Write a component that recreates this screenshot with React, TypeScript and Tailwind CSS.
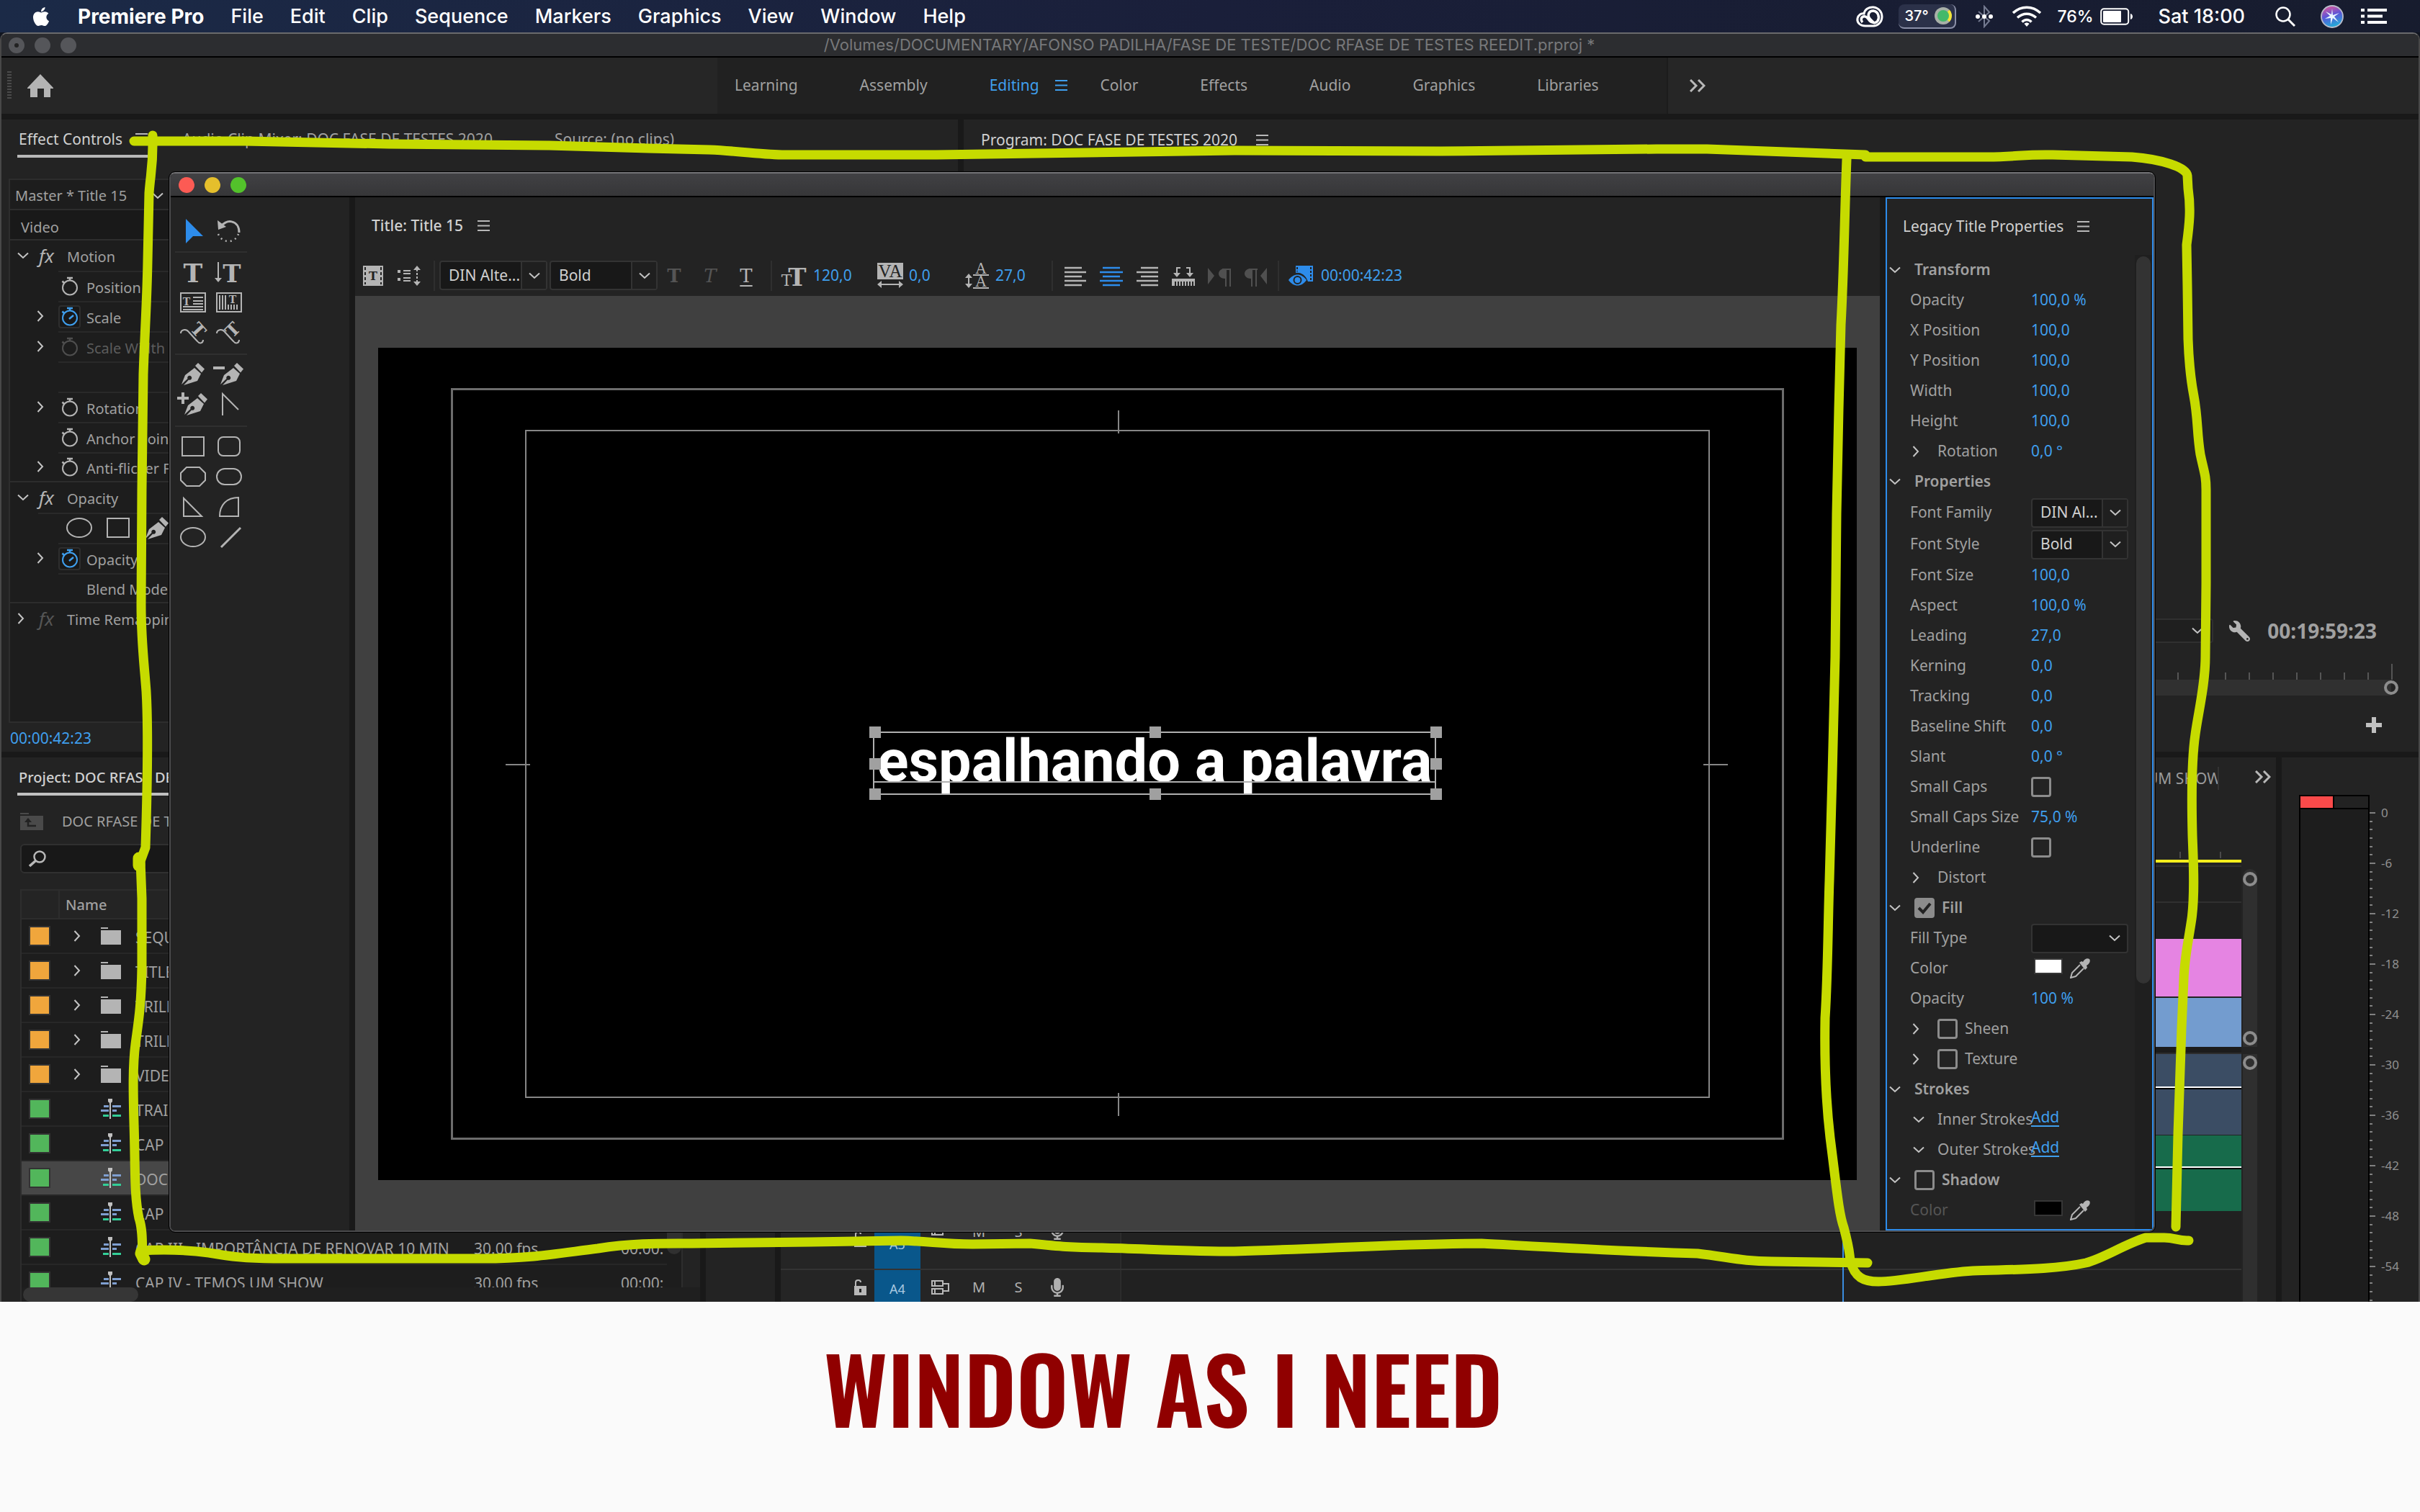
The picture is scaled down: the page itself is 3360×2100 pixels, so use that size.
import type { ReactNode } from "react";
import { FaApple, FaMicrophone, FaWrench } from "react-icons/fa";

/* ---------- shared icons ---------- */

const DOWN = "M1 1.5 8 8l7-6.5";
const RIGHT = "M1.500 1 8 8l-6.500 7";

function Down({ className = "" }: { className?: string }) {
  return (
    <svg viewBox="0 0 16 10" className={`h-[10px] w-4 shrink-0 ${className}`} fill="none" stroke="#c4c4c4" strokeWidth="2">
      <path d={DOWN} />
    </svg>
  );
}

function Right({ className = "" }: { className?: string }) {
  return (
    <svg viewBox="0 0 10 16" className={`h-4 w-[10px] shrink-0 ${className}`} fill="none" stroke="#c4c4c4" strokeWidth="2">
      <path d={RIGHT} />
    </svg>
  );
}

function Burger({ className = "text-[#b8b8b8]" }: { className?: string }) {
  return (
    <svg viewBox="0 0 17 16" className={`h-4 w-[17px] shrink-0 ${className}`} fill="currentColor">
      <path d="M0 0h17v2H0zM0 6.500h17v2H0zM0 13h17v2H0z" />
    </svg>
  );
}

function Chevrons() {
  return (
    <svg viewBox="0 0 22 18" className="h-[18px] w-[22px]" fill="none" stroke="#b8b8b8" strokeWidth="3">
      <path d="m1 1 8 8-8 8M12 1l8 8-8 8" />
    </svg>
  );
}

const Pen = () => (
  <g fill="#b4b4b4">
    <path d="M0 30 5 17 18 7l9 8-5 10L3 31l7-7.500a3 3 0 1 0-1.500-1.500z" />
    <path d="m19 4 4-4 9 8.500-4 5z" />
  </g>
);

const Ring = () => <span className="block h-5 w-5 shrink-0 rounded-full border-4 border-[#8c8c8c]" />;

/* ---------- menu bar ---------- */

const menus = ["File", "Edit", "Clip", "Sequence", "Markers", "Graphics", "View", "Window", "Help"];

function MenuBar() {
  return (
    <header className="flex h-[45px] shrink-0 items-center bg-linear-to-r from-[#1b2a47] via-[#1a1f3a] to-[#171c2e] pl-[42px] pr-[46px] font-['Inter',sans-serif] text-[27px] leading-[40px] text-white">
      <FaApple className="mr-[36px] size-[30px]" />
      <nav className="flex items-center gap-[37px] whitespace-nowrap">
        <button className="text-[28px] font-bold">Premiere Pro</button>
        {menus.map((m) => (
          <button key={m} className="font-medium">{m}</button>
        ))}
      </nav>
      <div className="ml-auto flex items-center whitespace-nowrap">
        <svg viewBox="0 0 40 30" className="h-[30px] w-10" fill="none" stroke="#fff">
          <path d="M14 28C6 28 2 23 3 17.500 4 13 8 10 12 11 13 5 19 1.500 25 2c8 1 12 7 12 13 0 8-6 13-12 13z" strokeWidth="3" />
          <path d="M10 23c-3-3-2-7 1-8 4-1 6 2 9 6 3 3 8 4 11 0 3-5 1-13-6-14-7 0-9 7-4 12l4 4" strokeWidth="3.500" />
        </svg>
        <span className="ml-5 flex h-[34px] w-20 items-center justify-between rounded-lg border-b-2 border-r-2 border-[#8b90a8] bg-[#2b3149] pl-2 pr-1 text-[20px] font-medium">
          37°
          <span className="flex size-6 items-center justify-center rounded-full border-[4px] border-[#a8b0a8] border-r-[#f3e53b] bg-[#43b96a]" />
        </span>
        <svg viewBox="0 0 24 32" className="ml-[27px] h-8 w-6" fill="none" stroke="#747a90" strokeWidth="2">
          <path d="m4 9 15 13-7 8V2l7 8L4 23" />
          <g fill="#fff" stroke="none"><circle cx="3" cy="16" r="3" /><circle cx="12" cy="16" r="3" /><circle cx="21" cy="16" r="3" /></g>
        </svg>
        <svg viewBox="0 0 42 30" className="ml-[26px] h-[30px] w-[42px]" fill="none" stroke="#fff" strokeWidth="3.500">
          <path d="M2 10c11-10.500 27-10.500 38 0M8 16.500c8-7 18-7 26 0M14.500 22.500c4-4 9-4 13 0" />
          <path d="m21 29-3.500-4c2-2 5-2 7 0z" fill="#fff" stroke="none" />
        </svg>
        <span className="ml-[21px] text-[23px] font-medium">76%</span>
        <svg viewBox="0 0 46 24" className="ml-[9px] h-6 w-[46px]" fill="none">
          <rect x="1.200" y="1.200" width="38" height="21.600" rx="4" stroke="#fff" strokeWidth="2" />
          <rect x="4" y="4" width="25" height="16" rx="1" fill="#fff" />
          <path d="M42 8c4 1 4 7 0 8z" fill="#fff" />
        </svg>
        <time className="ml-[35px] font-medium">Sat 18:00</time>
        <svg viewBox="0 0 28 28" className="ml-[42px] size-7" fill="none" stroke="#fff" strokeWidth="2.500">
          <circle cx="11" cy="11" r="9.500" />
          <path d="m18 18 9 9" strokeWidth="3" />
        </svg>
        <svg viewBox="0 0 32 32" className="ml-[35px] size-8">
          <defs>
            <linearGradient id="siri" x1="0.300" y1="0" x2="0.600" y2="1">
              <stop offset="0" stopColor="#e0559b" /><stop offset="0.450" stopColor="#5b55d8" /><stop offset="1" stopColor="#1db4d8" />
            </linearGradient>
          </defs>
          <circle cx="16" cy="16" r="15" fill="url(#siri)" stroke="#b9bccb" strokeWidth="1.800" />
          <path d="m16 5 1 9 9-3-7 5 6 8-8-6-3 9v-9l-8 1 7-4-6-6 8 4z" fill="#e9f6ff" />
        </svg>
        <svg viewBox="0 0 36 21" className="ml-6 h-[21px] w-9" fill="#fff">
          <path d="M0 0h5v4H0zM9 0h27v4H9zM0 8.500h5v4H0zM9 8.500h21v4H9zM0 17h5v4H0zM9 17h27v4H9z" />
        </svg>
      </div>
    </header>
  );
}

/* ---------- workspaces ---------- */

function Workspaces() {
  return (
    <div className="flex h-20 shrink-0 items-center border-t-2 border-black bg-[#262626] text-[21px] text-[#a0a0a0]">
      <span className="ml-2 h-10 w-[6px] shrink-0 bg-[repeating-linear-gradient(to_bottom,#4a4a4a_0_2px,transparent_2px_4px)]" />
      <button aria-label="Home" className="ml-[22px]">
        <svg viewBox="0 0 36 32" className="h-8 w-9" fill="#b4b4b4">
          <path d="M18 0 36 19v1h-4v12h-9V20h-9v12H4V20H0v-1z" />
        </svg>
      </button>
      <nav className="ml-[922px] flex h-full items-center gap-[86px] bg-[#212121] pl-6 pr-[94px]">
        <button>Learning</button>
        <button>Assembly</button>
        <span className="flex items-center gap-[22px]">
          <button className="text-[#3f9fee]">Editing</button>
          <Burger className="text-[#3f9fee]" />
        </span>
        <button className="-ml-10">Color</button>
        <button>Effects</button>
        <button>Audio</button>
        <button>Graphics</button>
        <button>Libraries</button>
      </nav>
      <button aria-label="More workspaces" className="flex h-full items-center border-l-2 border-[#1c1c1c] pl-[30px]"><Chevrons /></button>
    </div>
  );
}

/* ---------- effect controls ---------- */

function Stopwatch({ on, dim }: { on?: boolean; dim?: boolean }) {
  const color = on ? "#3f9fee" : dim ? "#4e4e4e" : "#b4b4b4";
  return (
    <span className={`flex h-8 w-[31px] shrink-0 items-center justify-center rounded border-2 ${on ? "border-[#2e2e2e] bg-[#181818]" : "border-transparent"}`}>
      <svg viewBox="0 0 24 28" className="h-7 w-6" fill="none" stroke={color} strokeWidth="2">
        <circle cx="12" cy="15.500" r="10" />
        <path d="M8 2h8M12 2v4M1.500 6.500l3 3" strokeWidth="2.500" />
        {on && <path d="m11 17 6-5" strokeWidth="2.500" />}
      </svg>
    </span>
  );
}

function EffectRow({ name, open, bypass }: { name: string; open: boolean; bypass?: boolean }) {
  return (
    <div className="flex h-[42px] items-center">
      <span className="flex w-10 shrink-0 pl-[10px]">{open ? <Down /> : <Right />}</span>
      <span className={`w-[39px] shrink-0 text-[26px] italic leading-[40px] ${bypass ? "text-[#555]" : "text-[#b4b4b4]"}`}>fx</span>
      <span className="pt-1">{name}</span>
    </div>
  );
}

function ParamRow({ name, arrow, watch = true, on, dim, last }: { name: string; arrow?: boolean; watch?: boolean; on?: boolean; dim?: boolean; last?: boolean }) {
  return (
    <div className={`flex h-[42px] items-center ${last ? "border-b-2 border-[#2c2c2c]" : ""}`}>
      <span className="flex w-[67px] shrink-0 pl-[37px]">{arrow && <Right />}</span>
      <span className={`flex h-full flex-1 items-center gap-2 border-t-2 border-[#292929] ${dim ? "text-[#5c5c5c]" : ""}`}>
        {watch ? <Stopwatch on={on} dim={dim} /> : <span className="w-[31px]" />}
        <span className="pt-1">{name}</span>
      </span>
    </div>
  );
}

function EffectControls() {
  return (
    <section className="flex w-[1328px] shrink-0 flex-col overflow-hidden bg-[#232323] text-[20px] text-[#a0a0a0]">
      <div className="flex h-[53px] shrink-0 items-end whitespace-nowrap text-[21px] leading-[44px]">
        <button className="ml-[22px] flex w-[181px] items-center justify-between border-b-4 border-[#b8b8b8] pl-[2px] text-[#d0d0d0]">
          Effect Controls <Burger />
        </button>
        <button className="ml-[48px] border-b-4 border-transparent">Audio Clip Mixer: DOC FASE DE TESTES 2020</button>
        <button className="ml-[86px] border-b-4 border-transparent">Source: (no clips)</button>
      </div>
      <div className="ml-[10px] mt-[29px] flex flex-1 flex-col border-2 border-[#2d2d2d] bg-[#1d1d1d]">
        <div className="flex h-[42px] items-center border-b-2 border-[#2d2d2d] pl-[7px] pt-1">
          <span className="w-[190px]">Master * Title 15</span><Down />
        </div>
        <div className="flex h-[42px] items-center border-b-2 border-[#2d2d2d] bg-[#191919] pl-[15px] pt-2">Video</div>
        <EffectRow name="Motion" open />
        <ParamRow name="Position" />
        <ParamRow name="Scale" arrow on />
        <ParamRow name="Scale Width" arrow dim />
        <ParamRow name="" watch={false} />
        <ParamRow name="Rotation" arrow />
        <ParamRow name="Anchor Point" />
        <ParamRow name="Anti-flicker Filter" arrow last />
        <EffectRow name="Opacity" open />
        <div className="ml-[39px] flex h-[42px] items-center border-t-2 border-[#292929] pl-[39px]">
          <svg viewBox="0 0 150 32" className="h-8 w-[150px]" fill="none" stroke="#b4b4b4" strokeWidth="2">
            <ellipse cx="18" cy="15" rx="17" ry="13" />
            <rect x="57" y="2" width="30" height="26" />
            <g transform="translate(110 0)" stroke="none"><Pen /></g>
          </svg>
        </div>
        <ParamRow name="Opacity" arrow on />
        <ParamRow name="Blend Mode" watch={false} last />
        <EffectRow name="Time Remapping" open={false} bypass />
      </div>
      <div className="flex h-10 shrink-0 items-center pl-3 pt-1 text-[21px] text-[#3f9fee]"><button>00:00:42:23</button></div>
    </section>
  );
}

/* ---------- program monitor ---------- */

function ProgramMonitor() {
  return (
    <section className="flex min-w-0 flex-1 flex-col bg-[#232323] text-[#a0a0a0]">
      <div className="flex h-[57px] items-center gap-[26px] pl-6 text-[21px] text-[#d0d0d0]">
        Program: DOC FASE DE TESTES 2020 <Burger />
      </div>
      <div className="flex-1" />
      <div className="flex h-[34px] items-center justify-end pr-[58px]">
        <div className="flex h-full w-[300px] items-center justify-end rounded border-2 border-[#303030] bg-[#1f1f1f] pr-3"><Down /></div>
        <FaWrench className="ml-[22px] size-[29px] -scale-x-100 text-[#b4b4b4]" />
        <time className="ml-6 text-[28px] font-bold">00:19:59:23</time>
      </div>
      <div className="mt-7 flex h-[23px] flex-row-reverse items-end pr-[36px]">
        <span className="h-[22px] border-r-2 border-[#555]" />
        {Array.from({ length: 11 }, (_, i) => (
          <span key={i} className="flex h-[10px] w-[33px] border-l-2 border-[#555]" />
        ))}
      </div>
      <div className="flex h-[22px] items-center justify-end bg-linear-to-l from-transparent from-[38px] to-[#303030] to-[38px] pr-[28px]"><Ring /></div>
      <div className="flex h-[78px] items-center justify-end pr-[51px] pt-1">
        <button aria-label="Button editor">
          <svg viewBox="0 0 22 22" className="size-[22px]" fill="#c0c0c0"><path d="M8 0h6v8h8v6h-8v8H8v-8H0V8h8z" /></svg>
        </button>
      </div>
    </section>
  );
}

/* ---------- project panel ---------- */

const items = [
  { name: "SEQUENCES", bin: true }, { name: "TITLES", bin: true }, { name: "TRILHA", bin: true },
  { name: "TRILHA 2", bin: true }, { name: "VIDEOS", bin: true }, { name: "TRAILER" }, { name: "CAP" },
  { name: "DOC", selected: true }, { name: "CAP" },
  { name: "CAP III - IMPORTÂNCIA DE RENOVAR 10 MIN", rate: "30.00 fps", start: "00:00:" },
  { name: "CAP IV - TEMOS UM SHOW", rate: "30.00 fps", start: "00:00:" },
] as { name: string; bin?: boolean; selected?: boolean; rate?: string; start?: string }[];

function ItemIcon({ bin }: { bin?: boolean }) {
  return bin ? (
    <svg viewBox="0 0 28 24" className="h-6 w-7 shrink-0" fill="#b4b4b4"><path d="M0 0h10v2H0zM0 4h28v20H0z" /></svg>
  ) : (
    <svg viewBox="0 0 28 28" className="h-7 w-7 shrink-0">
      <path d="M4 9h7v3H4zM0 15h11v3H0zM16 9h12v3H16zM16 15h6v3h-6z" fill="#7f9fd0" />
      <path d="M3 22h8v3H3zM16 22h12v3H16z" fill="#33cf98" />
      <path d="M10 0h6v4l-2 2v22h-2V6l-2-2z" fill="#c0c0c0" />
    </svg>
  );
}

function ProjectPanel() {
  return (
    <section className="flex w-[970px] shrink-0 flex-col overflow-hidden bg-[#232323] text-[20px] text-[#a0a0a0]">
      <div className="flex shrink-0 pl-[22px] text-[#d0d0d0]">
        <button className="h-[53px] border-b-4 border-[#c0c0c0] pl-[2px] pr-6 pt-[6px] font-medium">Project: DOC RFASE DE TESTES REEDIT</button>
      </div>
      <div className="flex h-[67px] shrink-0 items-center gap-[26px] pl-[26px] pt-1">
        <svg viewBox="0 0 32 24" className="h-6 w-8"><path d="M0 0h12v2H0zM0 4h32v20H0z" fill="#4a4a4a" /><path d="M11 8v10h11" stroke="#222" strokeWidth="2.500" fill="none" /><path d="m6 13 5-6 5 6z" fill="#222" /></svg>
        DOC RFASE DE TESTES REEDIT.prproj
      </div>
      <label className="ml-[26px] mr-6 flex h-[41px] shrink-0 items-center rounded-md border-2 border-[#303030] bg-[#181818] pl-[10px]">
        <svg viewBox="0 0 24 24" className="size-6 shrink-0" fill="none" stroke="#b8b8b8" strokeWidth="2.500"><circle cx="15" cy="9" r="7.500" /><path d="M10 14 1 22" strokeWidth="3.500" /></svg>
        <input aria-label="Search project" className="ml-2 flex-1 bg-transparent outline-none" />
      </label>
      <div className="ml-[26px] mr-6 mt-[22px] flex min-h-0 flex-1 overflow-hidden border-l-2 border-r-2 border-t-2 border-[#2d2d2d] bg-[#1d1d1d]">
        <table className="w-full table-fixed self-start whitespace-nowrap text-left">
          <colgroup><col className="w-[52px]" /><col className="w-[576px]" /><col className="w-[204px]" /><col /></colgroup>
          <thead>
            <tr className="h-[39px] border-b-2 border-[#2d2d2d] bg-[#242424]">
              <th /><th className="border-l-2 border-[#2d2d2d] pl-2 pt-[2px] font-medium">Name</th><th /><th />
            </tr>
          </thead>
          <tbody>
            {items.map((it, i) => (
              <tr key={i} className={`h-12 border-b-2 border-[#272727] text-[21px] leading-7 ${it.selected ? "bg-[#474747]" : ""}`}>
                <td><span className={`ml-[10px] block h-7 w-[30px] border-2 border-[#333] ${it.bin ? "bg-[#f0a63c]" : "bg-[#52b65b]"}`} /></td>
                <td className="overflow-hidden">
                  <span className="flex items-center">
                    <span className="flex w-[58px] shrink-0 pl-5">{it.bin && <Right />}</span>
                    <ItemIcon bin={it.bin} />
                    <span className="pl-5 pt-1">{it.name}</span>
                  </span>
                </td>
                <td className="pt-1">{it.rate}</td>
                <td className="overflow-hidden pt-1">{it.start}</td>
              </tr>
            ))}
          </tbody>
        </table>
        <span className="h-[505px] w-5 shrink-0 rounded-full bg-[#303030]" />
      </div>
      <div className="ml-[26px] h-5 shrink-0 border-l-2 border-[#2d2d2d] bg-[#1f1f1f] pl-[2px]"><span className="block h-5 w-40 rounded-full bg-[#363636]" /></div>
    </section>
  );
}

/* ---------- timeline ---------- */

function Track({ className = "", head, children }: { className?: string; head?: ReactNode; children?: ReactNode }) {
  return (
    <div className={`flex ${className}`}>
      <div className="w-[473px] shrink-0 border-r-2 border-[#2c2c2c] bg-[#252525]">{head}</div>
      <div className="flex-1">{children}</div>
    </div>
  );
}

function TrackHead({ name, high }: { name: string; high?: boolean }) {
  const lift = high ? "mt-[14px]" : "";
  return (
    <div className={`flex h-full pl-[101px] text-[20px] text-[#b0b0b0] ${high ? "items-start" : "items-center"}`}>
      <svg viewBox="0 0 18 22" className={`h-[22px] w-[18px] shrink-0 ${high ? "mt-[28px]" : ""}`}><path d="M1 9h17v13H1z" fill="#b8b8b8" /><path d="M3 9V4c0-4 7-4 7 0" stroke="#b8b8b8" strokeWidth="2" fill="none" /><path d="M8 13h3v5H8z" fill="#222" /></svg>
      <button className={`ml-[11px] h-full w-16 shrink-0 bg-[#09578b] text-[18px] text-[#a8c8e0] ${high ? "pt-3" : "pt-1"}`}>{name}</button>
      <svg viewBox="0 0 26 20" className={`ml-[15px] h-5 w-[26px] shrink-0 ${lift}`} fill="none" stroke="#b8b8b8" strokeWidth="2"><path d="M1 1h15v7H1zM1 12h15v7H1zM16 5h8v10h-8M5 1v7M5 12v7" /></svg>
      <button className={`ml-[28px] w-6 ${lift}`}>M</button>
      <button className={`ml-[31px] w-6 ${lift}`}>S</button>
      <FaMicrophone className={`ml-[29px] size-[26px] ${lift}`} />
    </div>
  );
}

function Timeline() {
  return (
    <section className="flex min-w-0 flex-1 flex-col overflow-hidden bg-[#232323]">
      <div className="flex h-[131px] shrink-0 items-start justify-end pr-[7px] pt-[13px] text-[21px] text-[#9a9a9a]">
        <button className="w-[100px] overflow-hidden whitespace-nowrap border-r-2 border-[#333] text-left leading-[32px]">UM SHOW</button>
        <button aria-label="More sequences" className="ml-[50px] mt-[5px]"><Chevrons /></button>
      </div>
      <div className="flex min-h-0 flex-1">
        <div className="relative min-w-0 flex-1">
          <div className="flex h-[11px] flex-row-reverse gap-[54px] pr-[28px]">
            {[0, 1, 2, 3].map((i) => <span key={i} className="h-[9px] w-[2px] bg-[#4a4a4a]" />)}
          </div>
          <div className="h-1 bg-[#f6ee1c]" />
          <Track className="mt-1 h-[50px] border-t-2 border-[#303030] bg-[#202020]" />
          <Track className="h-[52px] border-t-2 border-[#303030] bg-[#202020]" />
          <Track className="h-[81px]"><div className="h-20 bg-[#e584e2]" /></Track>
          <Track className="h-[69px]"><div className="mt-px h-[68px] bg-[#739ccf]" /></Track>
          <div className="h-[10px] border-b-2 border-[#2d2d2d] bg-[#1c1c1c]" />
          <Track className="h-[113px]"><div className="h-28 bg-[#3b4d64] pt-[45px]"><div className="h-1 border-b-2 border-t-2 border-b-black border-t-white" /></div></Track>
          <Track className="h-[105px]"><div className="h-[105px] bg-[#176b4b] pt-[43px]"><div className="h-1 border-b-2 border-t-2 border-b-black border-t-white" /></div></Track>
          <Track className="h-[82px] border-b-2 border-[#333] bg-[#212121]" head={<TrackHead name="A3" high />} />
          <Track className="h-12 bg-[#212121]" head={<TrackHead name="A4" />} />
          <span className="absolute inset-y-0 left-[1474px] w-[2px] bg-[#3a8de0]" />
        </div>
        <div className="mx-[2px] flex w-5 shrink-0 flex-col">
          <div className="mt-6 flex h-[247px] shrink-0 flex-col justify-between rounded-t-full bg-[#2f2f2f] pb-[2px] pt-1"><Ring /><Ring /></div>
          <div className="mt-[10px] flex-1 bg-[#2f2f2f] pt-[2px]"><Ring /></div>
        </div>
        <div className="w-6 shrink-0" />
      </div>
    </section>
  );
}

const levels = ["0", "-6", "-12", "-18", "-24", "-30", "-36", "-42", "-48", "-54"];

function Meters() {
  return (
    <section className="flex w-[190px] shrink-0 overflow-hidden bg-[#232323] pl-6 pt-[52px]">
      <div className="flex w-[98px] flex-col border-2 border-b-0 border-black bg-[#1d1d1d]">
        <div className="flex h-[18px] border-b-2 border-black bg-[#222]"><span className="w-[47px] border-r-2 border-black bg-[#fa4a4a]" /></div>
      </div>
      <ul className="pt-3 text-[17px] leading-[26px] text-[#909090]">
        {levels.map((l) => (
          <li key={l} className="flex h-[70px] items-start gap-[6px]">
            <svg viewBox="0 0 10 70" className="mt-[12px] h-[70px] w-[10px] shrink-0" fill="#808080">
              <path d="M0 0h8v2H0zM0 12h4v2H0zM0 23h4v2H0zM0 35h4v2H0zM0 47h4v2H0zM0 58h4v2H0z" />
            </svg>
            {l}
          </li>
        ))}
      </ul>
    </section>
  );
}

/* ---------- titler ---------- */

function Select({ label, value, id, className }: { label?: string; value: string; id: string; className: string }) {
  return (
    <span className={`relative flex h-[41px] shrink-0 rounded-[4px] border-2 border-[#333] bg-[#181818] text-[#d0d0d0] ${className}`}>
      <select id={id} aria-label={label} className="w-full appearance-none bg-transparent pl-[11px] outline-none"><option>{value}</option></select>
      <span className={`pointer-events-none absolute inset-y-0 right-0 flex w-[35px] items-center justify-center ${value ? "border-l-2 border-[#333] bg-[#1f1f1f]" : ""}`}><Down /></span>
    </span>
  );
}

const G = "#b4b4b4";
const slab = "font-['DejaVu_Serif',serif] font-bold";

const tools: { name: string; art: ReactNode }[][] = [
  [
    { name: "Selection", art: <path d="M15 5v34l10-10h14z" fill="#2d8ceb" stroke="none" /> },
    { name: "Rotation", art: <><path d="M13 17C20 4 39 6 39 24" strokeWidth="3" /><path d="m9 7 1 13 11-4z" fill={G} stroke="none" /><path d="M10 26c5 13 23 14 28 0" strokeDasharray="2 5" strokeWidth="2.500" /></> },
  ],
  [
    { name: "Type", art: <text x="25" y="35" fontSize="36" textAnchor="middle" fill={G} stroke="none" className={slab}>T</text> },
    { name: "Vertical Type", art: <><text x="29" y="35" fontSize="34" textAnchor="middle" fill={G} stroke="none" className={slab}>T</text><path d="M10 7v24" /><path d="M5 29h10l-5 6z" fill={G} stroke="none" /></> },
    { name: "Area Type", art: <><rect x="8" y="8" width="34" height="26" /><text x="16" y="25" fontSize="14" textAnchor="middle" fill={G} stroke="none" className={slab}>T</text><path d="M25 14h14M25 19h14M25 23h14M11 27h28M11 31h28" /></> },
    { name: "Vertical Area Type", art: <><rect x="8" y="8" width="34" height="26" /><text x="30" y="22" fontSize="14" textAnchor="middle" fill={G} stroke="none" className={slab}>T</text><path d="M12 11v20M16 11v20M20 11v20M24 24v7M28 24v7M32 24v7M36 24v7" /></> },
    { name: "Path Type", art: <><path d="M8 22c0-5 7-7 11-2l12 13c3 4 8 3 8-2" /><text x="0" y="0" fontSize="24" textAnchor="middle" fill={G} stroke="none" transform="translate(26 23) rotate(48)" className={slab}>T</text></> },
    { name: "Vertical Path Type", art: <><path d="M8 22c0-5 7-7 11-2l12 13c3 4 8 3 8-2" /><text x="0" y="0" fontSize="24" textAnchor="middle" fill={G} stroke="none" transform="translate(36 23) rotate(-45)" className={slab}>T</text></> },
  ],
  [
    { name: "Pen", art: <g transform="translate(9 5)" stroke="none"><Pen /></g> },
    { name: "Delete Anchor Point", art: <><g transform="translate(13 5)" stroke="none"><Pen /></g><path d="M3 12h16" strokeWidth="4" /></> },
    { name: "Add Anchor Point", art: <><g transform="translate(13 5)" stroke="none"><Pen /></g><path d="M3 12h16M11 4v16" strokeWidth="4" /></> },
    { name: "Convert Anchor Point", art: <path d="M16 36V6l22 22" /> },
  ],
  [
    { name: "Rectangle", art: <rect x="10" y="8" width="30" height="26" /> },
    { name: "Rounded Corner Rectangle", art: <rect x="10" y="8" width="30" height="26" rx="7" /> },
    { name: "Clipped Corner Rectangle", art: <path d="M16 8h18l8 8v10l-8 8H16l-8-8V16z" /> },
    { name: "Rounded Rectangle", art: <rect x="8" y="10" width="34" height="22" rx="11" /> },
    { name: "Wedge", art: <path d="M12 9v25h25z" /> },
    { name: "Arc", art: <path d="M38 8v26H12C12 18 22 8 38 8z" /> },
    { name: "Ellipse", art: <ellipse cx="25" cy="21" rx="17" ry="13" /> },
    { name: "Line", art: <path d="m14 35 27-27" strokeWidth="3" /> },
  ],
];

function ToolPanel() {
  return (
    <aside className="w-[248px] shrink-0 bg-[#232323] pl-[6px] pt-[25px]">
      {tools.map((group, g) => (
        <div key={g} className={`grid w-[100px] grid-cols-2 ${g ? "mt-2 border-t-2 border-[#2f2f2f] pt-[6px]" : ""}`}>
          {group.map((t) => (
            <button key={t.name} aria-label={t.name} className="h-[42px] w-[50px]">
              <svg viewBox="0 0 50 42" className="h-[42px] w-[50px] overflow-visible" fill="none" stroke={G} strokeWidth="2">{t.art}</svg>
            </button>
          ))}
        </div>
      ))}
    </aside>
  );
}

const Sep = () => <span className="h-[42px] w-[2px] shrink-0 bg-[#2f2f2f]" />;

function Glyph({ name, w = 32, h = 32, className = "", children }: { name: string; w?: number; h?: number; className?: string; children: ReactNode }) {
  return (
    <button aria-label={name} className={`shrink-0 ${className}`}>
      <svg viewBox={`0 0 ${w} ${h}`} width={w} height={h} className="overflow-visible" fill="none" stroke={G} strokeWidth="2">{children}</svg>
    </button>
  );
}

function TitleToolbar() {
  return (
    <div className="flex h-[57px] shrink-0 items-center pl-[11px] text-[21px] text-[#3f9fee]">
      <Glyph name="Roll/Crawl Options" w={28} h={28}>
        <path d="M0 0h28v28H0z" fill={G} stroke="none" />
        <path d="M3 2v24M25 2v24" stroke="#232323" strokeDasharray="4 3" />
        <text x="14" y="20" fontSize="16" textAnchor="middle" fill="#232323" stroke="none" className={slab}>T</text>
      </Glyph>
      <Glyph name="Templates" w={34} h={28} className="ml-5 mr-4">
        <path d="M0 8h4M0 19h4" strokeWidth="4" />
        <path d="M8 7h10M8 11h10M8 17h10M8 21h10" />
        <path d="M27 5v18" strokeDasharray="3 2" />
        <path d="m22 6 5-6 5 6zM22 22l5 6 5-6z" fill={G} stroke="none" />
      </Glyph>
      <Sep />
      <Select id="bar-family" label="Font family" value="DIN Alte..." className="ml-[6px] w-[150px]" />
      <Select id="bar-style" label="Font style" value="Bold" className="ml-[3px] w-[150px]" />
      <span className={`ml-[11px] mr-[22px] flex gap-[26px] text-[26px] leading-[26px] text-[#555] ${slab}`}>
        <button className="w-6">T</button>
        <button className="w-6 font-normal italic">T</button>
        <button className="w-6 font-normal text-[#b4b4b4] underline underline-offset-4">T</button>
      </span>
      <Sep />
      <Glyph name="Size" w={36} h={30} className="ml-3">
        <text x="23" y="29" fontSize="34" textAnchor="middle" fill={G} stroke="none" className={slab}>T</text>
        <text x="8" y="29" fontSize="22" textAnchor="middle" fill={G} stroke="none" className="font-['DejaVu_Serif',serif]">T</text>
      </Glyph>
      <button className="ml-[9px] w-[80px] text-left">120,0</button>
      <Glyph name="Kerning" w={36} h={36} className="ml-[9px]">
        <path d="M0 0h36v23H0z" fill={G} stroke="none" />
        <text x="18" y="20" fontSize="25" textAnchor="middle" fill="#232323" stroke="none" className="font-['Liberation_Serif',serif]">VA</text>
        <path d="M4 30h28" /><path d="m0 30 6-5v10zM36 30l-6-5v10z" fill={G} stroke="none" />
      </Glyph>
      <button className="ml-2 w-[69px] text-left">0,0</button>
      <Glyph name="Leading" w={34} h={36} className="ml-[9px]">
        <text x="22" y="15" fontSize="20" textAnchor="middle" fill={G} stroke="none" className="font-['DejaVu_Serif',serif]">A</text>
        <text x="22" y="33" fontSize="20" textAnchor="middle" fill={G} stroke="none" className="font-['DejaVu_Serif',serif]">A</text>
        <path d="M11 17h22M11 35h22M5 18v14" /><path d="m0 21 5-6 5 6zM0 29l5 6 5-6z" fill={G} stroke="none" />
      </Glyph>
      <button className="ml-2 mr-[10px] w-[68px] text-left">27,0</button>
      <Sep />
      <span className="ml-[15px] mr-[15px] flex gap-[18px]">
        <Glyph name="Left"><path d="M1 5h24M1 11h30M1 17h24M1 23h30M1 29h24" strokeWidth="2.500" /></Glyph>
        <Glyph name="Center"><path d="M4 5h24M0 11h32M4 17h24M0 23h32M4 29h24" stroke="#2d8ceb" strokeWidth="2.500" /></Glyph>
        <Glyph name="Right"><path d="M7 5h24M1 11h30M7 17h24M1 23h30M7 29h24" strokeWidth="2.500" /></Glyph>
        <Glyph name="Tab Stops"><path d="M0 20h32v10H0z" fill={G} stroke="none" /><path d="M5 24v7M9 24v7M13 24v7M17 24v7M21 24v7M25 24v7M29 24v7" stroke="#232323" /><path d="M12 5H7v8M20 5h5v8" /><path d="M2 12h10l-5 6zM20 12h10l-5 6z" fill={G} stroke="none" /></Glyph>
        <Glyph name="Left to right"><g fill="#505050" stroke="none"><path d="m0 5 9 11-9 12zM24 6v14c-12 0-12-14 0-14z" /></g><path d="M25 31V7h6v24M20 7h12" stroke="#505050" /></Glyph>
        <Glyph name="Right to left"><g fill="#505050" stroke="none"><path d="m32 5-9 11 9 12zM10 6v14C-2 20-2 6 10 6z" /></g><path d="M11 31V7h6v24M7 7h12" stroke="#505050" /></Glyph>
      </span>
      <Sep />
      <Glyph name="Show Background Video" w={34} h={28} className="ml-[13px] mr-[11px]">
        <path d="M10 0h24v22h-7C23 11 15 9 10 10z" fill="#2d8ceb" stroke="none" />
        <path d="M12 2v6M31 2v18" stroke="#232323" strokeDasharray="3 2" />
        <path d="M0 20c7-10 18-10 25 0-7 10-18 10-25 0z" fill="#2d8ceb" stroke="none" />
        <circle cx="12.500" cy="20" r="5" stroke="#232323" />
      </Glyph>
      <button>00:00:42:23</button>
    </div>
  );
}

const handle = "absolute size-4 bg-[#a0a0a0]";

function Canvas() {
  return (
    <div className="flex flex-1 bg-[#404040] px-8 pb-[70px] pt-[72px]">
      <div className="relative flex flex-1 bg-black px-[101px] py-[56px]">
        <div className="flex flex-1 border-[3px] border-[#6c6c6c] px-[100px] py-[55px]">
          <div className="flex-1 border-2 border-[#868686]" />
        </div>
        <span className="absolute left-1/2 top-[87px] h-8 w-[2px] bg-[#868686]" />
        <span className="absolute bottom-[89px] left-1/2 h-8 w-[2px] bg-[#868686]" />
        <span className="absolute left-[177px] top-1/2 h-[2px] w-[34px] bg-[#868686]" />
        <span className="absolute right-[179px] top-1/2 h-[2px] w-[34px] bg-[#868686]" />
        <div className="absolute left-[687px] top-[533px] h-[88px] w-[782px] border-2 border-[#b0b0b0] text-center font-['Roboto',sans-serif] text-[81px] font-bold text-white">
          <p className="-mt-1 whitespace-nowrap leading-[88px]">espalhando a palavra</p>
          <span className="absolute inset-x-0 top-[67px] h-[2px] bg-[#b0b0b0]" />
          <span className={`${handle} -left-[7px] -top-[9px]`} />
          <span className={`${handle} -top-[9px] left-[382px]`} />
          <span className={`${handle} -right-[10px] -top-[9px]`} />
          <span className={`${handle} -left-[7px] top-[35px]`} />
          <span className={`${handle} -right-[10px] top-[35px]`} />
          <span className={`${handle} -bottom-[9px] -left-[7px]`} />
          <span className={`${handle} -bottom-[9px] left-[382px]`} />
          <span className={`${handle} -bottom-[9px] -right-[10px]`} />
        </div>
      </div>
    </div>
  );
}

/* ---------- title properties ---------- */

type Prop = {
  label: string;
  kind?: "section" | "sub" | "group";
  value?: string;
  select?: string;
  swatch?: string;
  check?: boolean;
  valueCheck?: boolean;
  add?: boolean;
  dim?: boolean;
};

const props: Prop[] = [
  { label: "Transform", kind: "section" },
  { label: "Opacity", value: "100,0 %" },
  { label: "X Position", value: "100,0" },
  { label: "Y Position", value: "100,0" },
  { label: "Width", value: "100,0" },
  { label: "Height", value: "100,0" },
  { label: "Rotation", kind: "sub", value: "0,0 °" },
  { label: "Properties", kind: "section" },
  { label: "Font Family", select: "DIN Al..." },
  { label: "Font Style", select: "Bold" },
  { label: "Font Size", value: "100,0" },
  { label: "Aspect", value: "100,0 %" },
  { label: "Leading", value: "27,0" },
  { label: "Kerning", value: "0,0" },
  { label: "Tracking", value: "0,0" },
  { label: "Baseline Shift", value: "0,0" },
  { label: "Slant", value: "0,0 °" },
  { label: "Small Caps", valueCheck: true },
  { label: "Small Caps Size", value: "75,0 %" },
  { label: "Underline", valueCheck: true },
  { label: "Distort", kind: "sub" },
  { label: "Fill", kind: "section", check: true },
  { label: "Fill Type", select: "" },
  { label: "Color", swatch: "bg-white" },
  { label: "Opacity", value: "100 %" },
  { label: "Sheen", kind: "sub", check: false },
  { label: "Texture", kind: "sub", check: false },
  { label: "Strokes", kind: "section" },
  { label: "Inner Strokes", kind: "group", add: true },
  { label: "Outer Strokes", kind: "group", add: true },
  { label: "Shadow", kind: "section", check: false },
  { label: "Color", swatch: "bg-black", dim: true },
];

function Check({ id, on }: { id: string; on?: boolean }) {
  return (
    <span className="grid size-7 shrink-0">
      <input id={id} type="checkbox" defaultChecked={on} className="col-start-1 row-start-1 size-7 appearance-none rounded-[4px] border-[3px] border-[#8c8c8c] checked:bg-[#8c8c8c]" />
      {on && <svg viewBox="0 0 28 28" className="pointer-events-none col-start-1 row-start-1 size-7" fill="none" stroke="#232323" strokeWidth="4"><path d="m6 14 6 6L22 8" /></svg>}
    </span>
  );
}

function PropRow({ p, id }: { p: Prop; id: string }) {
  const bold = p.kind === "section" ? "font-semibold" : "";
  const indent = !p.kind ? "pl-8" : p.kind === "section" ? "pl-[3px]" : p.kind === "sub" ? "pl-[35px]" : "pl-9";
  const lead = p.kind === "group" ? "w-[34px]" : "w-[35px]";
  return (
    <div className={`flex items-center ${p.select ? "h-11" : "h-[42px]"}`}>
      <div className={`flex w-[200px] shrink-0 items-center whitespace-nowrap ${indent} ${p.dim ? "text-[#555]" : ""}`}>
        {p.kind && <span className={`flex shrink-0 ${lead}`}>{p.kind === "sub" ? <Right /> : <Down />}</span>}
        {p.check !== undefined && <span className="mr-[10px] flex"><Check id={id} on={p.check} /></span>}
        <label htmlFor={id} className={bold}>{p.label}</label>
      </div>
      {p.value && <button id={id} className="text-[#3f9fee]">{p.value}</button>}
      {p.select !== undefined && <Select id={id} value={p.select} className="w-[135px]" />}
      {p.valueCheck && <Check id={id} />}
      {p.add && <a id={id} href="#add" className="mb-[6px] border-b-2 border-[#3f9fee] leading-6 text-[#3f9fee]">Add</a>}
      {p.swatch && (
        <>
          <button id={id} aria-label={p.label} className={`mb-[6px] ml-1 h-[22px] w-10 border-2 border-[#363636] ${p.swatch}`} />
          <button aria-label="Pick colour" className="ml-[10px]">
            <svg viewBox="0 0 28 28" className="size-7"><path d="M14 9 3 20l-2 7 7-2 11-11" fill="none" stroke="#b4b4b4" strokeWidth="2" /><path d="m13 6 3-2 2 1c2-4 6-6 9-4 2 3 0 7-4 9l1 3-3 3z" fill="#b4b4b4" /></svg>
          </button>
        </>
      )}
    </div>
  );
}

function TitleProperties() {
  return (
    <aside className="flex w-[372px] shrink-0 flex-col overflow-hidden border-2 border-[#2d8ceb] bg-[#232323] text-[21px] text-[#a0a0a0]">
      <h2 className="flex h-[78px] shrink-0 items-center gap-[19px] pl-[22px] text-[#d0d0d0]">Legacy Title Properties <Burger /></h2>
      <div className="flex min-h-0 flex-1">
        <div className="flex-1">{props.map((p, i) => <PropRow key={i} p={p} id={`prop-${i}`} />)}</div>
        <div className="w-6 bg-[#1f1f1f] px-[2px]"><span className="mt-[2px] block h-[1010px] rounded-full bg-[#333]" /></div>
      </div>
    </aside>
  );
}

function TitleWindow() {
  return (
    <div className="absolute bottom-[97px] left-[235px] right-[368px] top-[239px] flex flex-col overflow-hidden rounded-[8px] border-2 border-[#4b4b4d] border-t-[#747477] bg-[#191919] outline outline-black">
      <div className="flex h-[33px] shrink-0 items-center gap-[14px] border-b-2 border-black bg-linear-to-b from-[#414144] to-[#363638] pl-[11px]">
        <button aria-label="Close" className="size-[22px] rounded-full bg-[#fc5b54]" />
        <button aria-label="Minimise" className="size-[22px] rounded-full bg-[#e5bf2c]" />
        <button aria-label="Zoom" className="size-[22px] rounded-full bg-[#53c22b]" />
      </div>
      <div className="flex min-h-0 flex-1 gap-2">
        <ToolPanel />
        <section className="flex min-w-0 flex-1 flex-col bg-[#232323]">
          <h2 className="flex h-20 shrink-0 items-center gap-5 pl-[23px] text-[21px] font-medium text-[#d0d0d0]">Title: Title 15 <Burger /></h2>
          <TitleToolbar />
          <Canvas />
        </section>
        <TitleProperties />
      </div>
    </div>
  );
}

/* ---------- marker annotation ---------- */

function Annotation() {
  return (
    <svg viewBox="0 0 3360 1808" preserveAspectRatio="none" className="pointer-events-none absolute inset-0 h-full w-full" fill="none" stroke="#c6db00" strokeWidth="13" strokeLinecap="round" strokeLinejoin="round">
      <path d="M186 196H340L540 200 760 202 900 206 985 208C1030 210 1060 215 1090 215H1300C1400 213 1500 212 1714 209L2000 210 2300 207H2370L2590 215" />
      <path d="M2590 218H2760C2800 218 2810 214 2850 215L2960 218C3000 221 3036 232 3037 244L3038 262C3042 290 3040 310 3036 340L3037 398 3038 471C3039 500 3042 529 3046 550 3052 582 3050 600 3055 631 3060 655 3063 660 3063 680V810L3062 912C3062 950 3052 990 3048 1020 3042 1060 3043 1120 3044 1160 3045 1190 3048 1240 3043 1276 3038 1310 3033 1330 3032 1360L3029 1428 3024 1575 3021 1704" />
      <path d="M3039 1723C3025 1724 3020 1719 3005 1719H2979C2950 1728 2920 1748 2896 1754 2850 1764 2790 1763 2739 1765 2690 1768 2640 1780 2608 1780 2588 1780 2575 1775 2569 1751 2567 1735 2568 1735 2560 1705 2553 1686 2550 1650 2541 1580 2534 1520 2533 1470 2534 1414 2538 1350 2538 1280 2540 1223L2544 1076 2548 912 2550 713 2553 568 2556 451C2560 380 2561 300 2564 221" />
      <path d="M195 1737C230 1735 260 1736 290 1740 320 1745 340 1748 380 1748H670C740 1748 780 1740 830 1734 880 1726 920 1727 960 1727L1126 1725 1251 1723C1290 1724 1310 1728 1350 1728L1430 1727C1470 1731 1490 1733 1530 1733 1600 1735 1660 1738 1714 1738 1850 1734 1950 1727 2057 1727 2150 1732 2250 1738 2357 1741 2400 1746 2420 1752 2460 1752L2593 1754" />
      <path d="M212 188C213 230 209 240 207 268L205 363C204 420 201 460 199 520L197 679 196 840C196 890 200 920 203 960 206 1010 205 1080 202 1177L195 1196 197 1248V1343C196 1400 192 1420 188 1450 184 1480 185 1520 186 1560 188 1620 186 1660 193 1692 199 1710 197 1730 198 1749" />
      <path d="M193 1192v10M196 1741l4 8" strokeWidth="17" />
    </svg>
  );
}

export default function App() {
  return (
    <div className="flex min-h-screen flex-col bg-[#fafafa] font-['Noto_Sans',sans-serif]">
      <main className="relative flex flex-1 flex-col overflow-hidden bg-[#10141f]">
        <MenuBar />
        <div className="flex grow flex-col overflow-hidden rounded-t-[10px] border-x-2 border-t-2 border-[#484848] border-t-[#6a6a6c] bg-[#191919]">
          <div className="flex h-[31px] shrink-0 items-center gap-[14px] bg-[#2c2d30] pl-[10px]">
            <span className="flex size-[22px] items-center justify-center rounded-full bg-[#55565a]"><span className="size-[6px] rounded-full bg-[#222]" /></span>
            <span className="size-[22px] rounded-full bg-[#55565a]" />
            <span className="size-[22px] rounded-full bg-[#55565a]" />
            <h1 className="flex-1 pr-[120px] text-center font-['Inter',sans-serif] text-[22px] leading-[31px] text-[#77787a]">/Volumes/DOCUMENTARY/AFONSO PADILHA/FASE DE TESTE/DOC RFASE DE TESTES REEDIT.prproj *</h1>
          </div>
          <Workspaces />
          <div className="mt-2 flex h-[878px] shrink-0 gap-2">
            <EffectControls />
            <ProgramMonitor />
          </div>
          <div className="mt-2 flex h-[756px] grow gap-2">
            <ProjectPanel />
            <aside className="w-24 shrink-0 bg-[#232323]" />
            <Timeline />
            <Meters />
          </div>
        </div>
        <TitleWindow />
        <Annotation />
      </main>
      <footer className="flex shrink-0 justify-center pb-[104px] pr-[130px] pt-12">
        <p className="whitespace-nowrap font-['Oswald','Bebas_Neue','Roboto_Condensed','Liberation_Sans_Narrow',sans-serif] text-[126px] font-semibold leading-[140px] text-[#900000]">WINDOW AS I NEED</p>
      </footer>
    </div>
  );
}
